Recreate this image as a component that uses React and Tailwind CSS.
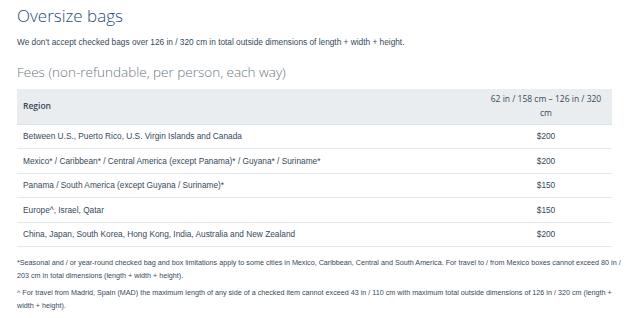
import React from "react";

const rows = [
	{ region: "Between U.S., Puerto Rico, U.S. Virgin Islands and Canada", fee: "$200" },
	{ region: "Mexico* / Caribbean* / Central America (except Panama)* / Guyana* / Suriname*", fee: "$200" },
	{ region: "Panama / South America (except Guyana / Suriname)*", fee: "$150" },
	{ region: "Europe^, Israel, Qatar", fee: "$150" },
	{ region: "China, Japan, South Korea, Hong Kong, India, Australia and New Zealand", fee: "$200" },
];

export default function App() {
	return (
		<div className="w-[640px] h-[318px] bg-white px-[17px] pt-[3px] text-[#36495a] font-['Liberation_Sans',Arial,sans-serif] overflow-hidden">
			{/* Heading */}
			<h1 className="font-['Open_Sans',sans-serif] font-light text-[17px] leading-[26px] text-[#1f4a7c]">
				Oversize bags
			</h1>
			<p className="mt-[7px] text-[8.3px] leading-[12px] text-[#36495a]">
				We don't accept checked bags over 126 in / 320 cm in total outside dimensions of length + width + height.
			</p>

			<h2 className="mt-[14px] font-['Open_Sans',sans-serif] font-light text-[13.5px] leading-[20px] text-[#6b7883]">
				Fees (non-refundable, per person, each way)
			</h2>

			{/* Fees table */}
			<table className="mt-[7px] w-[595px] table-fixed border-collapse text-[8.3px]">
				<thead>
					<tr className="bg-[#e9edef] h-[35px] border-b border-[#dde4e8]">
						<th className="text-left pl-[6px] font-['Open_Sans',sans-serif] font-semibold text-[8.5px] text-[#36495a]">
							Region
						</th>
						<th className="w-[132px] px-[6px] text-center font-['Open_Sans',sans-serif] font-normal text-[8.5px] leading-[14px] text-[#36495a]">
							62 in / 158 cm – 126 in / 320 cm
						</th>
					</tr>
				</thead>
				<tbody>
					{rows.map((row, idx) => (
						<tr key={idx} className="h-[24.5px] border-b border-[#e3e8eb]">
							<td className="pl-[6px] text-left">{row.region}</td>
							<td className="text-center">{row.fee}</td>
						</tr>
					))}
				</tbody>
			</table>

			{/* Footnotes */}
			<div className="mt-[9px] w-[606px] text-[7.2px] leading-[13px] text-[#36495a]">
				<p>
					*Seasonal and / or year-round checked bag and box limitations apply to some cities in Mexico, Caribbean, Central and South America. For travel to / from Mexico boxes cannot exceed 80 in / 203 cm in total dimensions (length + width + height).
				</p>
				<p className="mt-[4px]">
					^ For travel from Madrid, Spain (MAD) the maximum length of any side of a checked item cannot exceed 43 in / 110 cm with maximum total outside dimensions of 126 in / 320 cm (length + width + height).
				</p>
			</div>
		</div>
	);
}
